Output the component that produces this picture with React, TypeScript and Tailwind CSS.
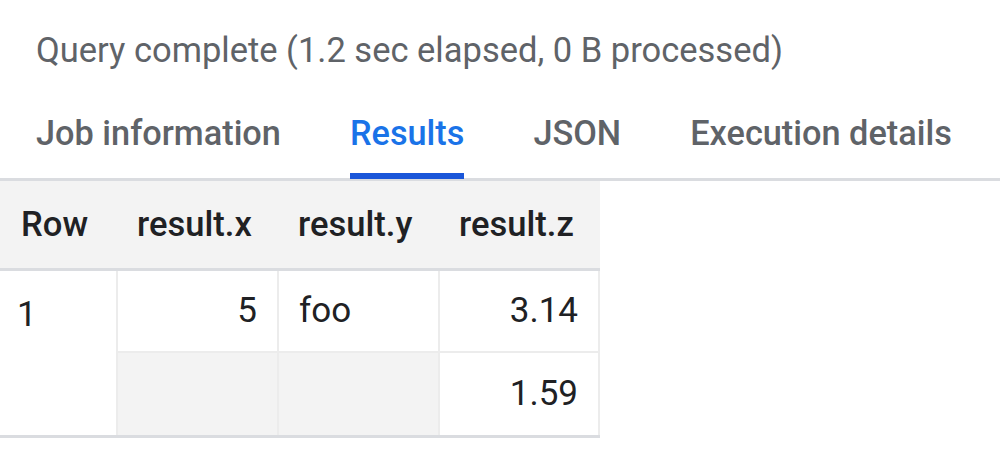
import React from "react";

const tabs = ["Job information", "Results", "JSON", "Execution details"];

export default function App() {
  return (
    <div className="w-[1000px] h-[454px] bg-white overflow-hidden font-['Roboto',sans-serif]">
      {/* Status line */}
      <div className="px-[36px] pt-[28px] h-[90px] text-[34.5px] leading-[44px] text-[#5f6368]">
        Query complete (1.2 sec elapsed, 0 B processed)
      </div>

      {/* Tabs */}
      <div className="flex gap-[69px] px-[36px] h-[91px] border-b-[3px] border-[#dadce0]">
        {tabs.map((t) => {
          const active = t === "Results";
          return (
            <div
              key={t}
              className={`relative flex items-center text-[34.3px] font-medium ${
                active ? "text-[#1a73e8]" : "text-[#5f6368]"
              }`}
            >
              {t}
              {active && (
                <span className="absolute left-0 right-0 bottom-[-1px] h-[6px] bg-[#1a56d9]" />
              )}
            </div>
          );
        })}
      </div>

      {/* Results table */}
      <div className="w-[600px] text-[35px] text-[#202124]">
        <div className="grid grid-cols-[116px_161px_161px_162px] h-[90px] bg-[#f3f3f3] border-b-[3px] border-[#dadce0] text-[34.6px] font-medium">
          <div className="flex items-center pl-[21px]">Row</div>
          <div className="flex items-center pl-[21px]">result.x</div>
          <div className="flex items-center pl-[21px]">result.y</div>
          <div className="flex items-center pl-[21px]">result.z</div>
        </div>
        <div className="grid grid-cols-[116px_161px_161px_162px] grid-rows-[82px_82px] border-b-[3px] border-[#dadce0]">
          <div className="row-span-2 pl-[17px] pt-[18px]">1</div>
          <div className="flex items-center justify-end pr-[20px] border-l-2 border-b-2 border-[#ececec]">5</div>
          <div className="flex items-center pl-[20px] border-l-2 border-b-2 border-[#ececec]">foo</div>
          <div className="flex items-center justify-end pr-[20px] border-x-2 border-b-2 border-[#ececec]">3.14</div>
          <div className="bg-[#f3f3f3] border-l-2 border-[#ececec]" />
          <div className="bg-[#f3f3f3] border-l-2 border-[#ececec]" />
          <div className="flex items-center justify-end pr-[20px] border-x-2 border-[#ececec]">1.59</div>
        </div>
      </div>
    </div>
  );
}
